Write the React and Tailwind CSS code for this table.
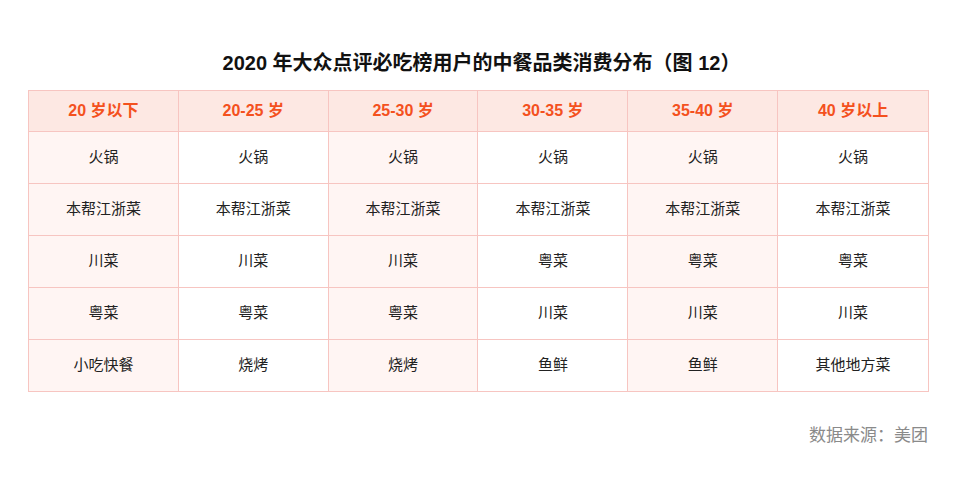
const headers = ["20 岁以下", "20-25 岁", "25-30 岁", "30-35 岁", "35-40 岁", "40 岁以上"];

const rows = [
    ["火锅", "火锅", "火锅", "火锅", "火锅", "火锅"],
    ["本帮江浙菜", "本帮江浙菜", "本帮江浙菜", "本帮江浙菜", "本帮江浙菜", "本帮江浙菜"],
    ["川菜", "川菜", "川菜", "粤菜", "粤菜", "粤菜"],
    ["粤菜", "粤菜", "粤菜", "川菜", "川菜", "川菜"],
    ["小吃快餐", "烧烤", "烧烤", "鱼鲜", "鱼鲜", "其他地方菜"],
];

const App = () => {
    return (
        <div
            className="w-[963px] h-[486px] bg-white flex flex-col"
            style={{ fontFamily: '"Liberation Sans", "Noto Sans CJK SC", sans-serif' }}>
            <h1 className="text-center text-[20px] font-bold text-[#111] mt-[49px] leading-[28px]">
                2020 年大众点评必吃榜用户的中餐品类消费分布（图 12）
            </h1>
            <div className="ml-[28px] w-[901px] mt-[13px] border border-[#f7c5c1] grid grid-cols-6">
                {headers.map((h, i) => (
                    <div
                        key={h}
                        className={`h-[40px] flex items-center justify-center bg-[#fde8e3] text-[#f4511e] text-[16px] font-bold border-[#f7c5c1] ${i < 5 ? "border-r" : ""}`}>
                        {h}
                    </div>
                ))}
                {rows.map((row, r) =>
                    row.map((cell, c) => (
                        <div
                            key={r + "-" + c}
                            className={`h-[52px] flex items-center justify-center text-[15px] text-[#222] border-t border-[#f7c5c1] ${c < 5 ? "border-r" : ""} ${c % 2 === 0 ? "bg-[#fff5f3]" : "bg-white"}`}>
                            {cell}
                        </div>
                    ))
                )}
            </div>
            <p className="text-right mr-[35px] mt-[31px] text-[17px] text-[#8a8a8a]">
                数据来源：美团
            </p>
        </div>
    );
};

export default App;
